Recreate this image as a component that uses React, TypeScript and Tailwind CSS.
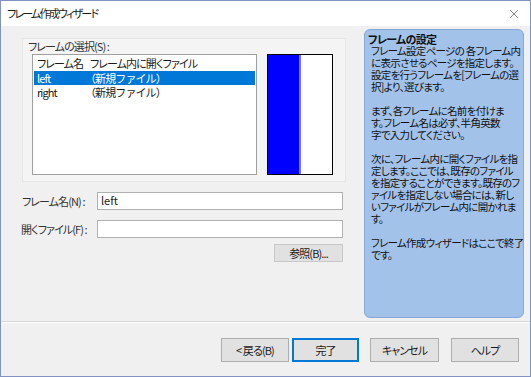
import React from 'react';
import { X } from 'lucide-react';

const font = "font-['Noto_Sans_CJK_JP','Noto_Sans',sans-serif] [font-feature-settings:'palt']";

const helpLines: string[][] = [
  ['フレーム設定ページの 各フレーム内', 'に表示させるページを指定します。', '設定を行うフレームを[フレームの選', '択]より、選びます。'],
  ['まず、各フレームに名前を付けま', 'す。フレーム名は必ず、半角英数', '字で入力してください。'],
  ['次に、フレーム内に開くファイルを指', '定します。ここでは、既存のファイル', 'を指定することができます。既存のフ', 'ァイルを指定しない場合には、新し', 'いファイルがフレーム内に開かれま', 'す。'],
  ['フレーム作成ウィザードはここで終了', 'です。'],
];

const Button: React.FC<{ label: string; width: string; primary?: boolean }> = ({ label, width, primary }) => (
  <div
    className={`${width} h-[24px] flex items-center justify-center text-[11px] text-[#1a1a1a] bg-[#e1e1e1] border ${
      primary ? 'border-[#0078d7] shadow-[inset_0_0_0_1px_#0078d7]' : 'border-[#adadad]'
    }`}
  >
    {label}
  </div>
);

const App: React.FC = () => {
  return (
    <div className={`w-[531px] h-[377px] flex flex-col bg-[#f0f0f0] border border-[#8390c2] overflow-hidden text-[#1a1a1a] tracking-[-0.9px] ${font}`}>
      {/* Title bar */}
      <div className="h-[25px] shrink-0 bg-white flex items-center justify-between pl-[6px] pr-[9px]">
        <span className="text-[11px] leading-none tracking-[-1.8px]">フレーム作成ウィザード</span>
        <X size={14} strokeWidth={1} className="text-[#333]" />
      </div>

      {/* Body */}
      <div className="flex-1 flex items-start pt-[3px]">
        {/* Left column */}
        <div className="ml-[19px] w-[325px] flex flex-col">
          <div className="mt-[9px] w-[324px] h-[144px] bg-[#f4f4f4] border border-[#e6e6e6] ml-[2px] flex flex-col">
            <div className="pl-[5px] h-[14px] text-[11px] leading-[14px] text-[#333]">フレームの選択(S) :</div>
            <div className="flex mt-[1px] ml-[9px]">
              <div className="w-[225px] h-[121px] bg-white border border-[#a0a0a0] flex flex-col pt-[2px] text-[11px]">
                <div className="flex h-[13px] leading-[13px] pl-[4px] whitespace-nowrap">
                  <span className="w-[53px]">フレーム名</span>
                  <span>フレーム内に開くファイル</span>
                </div>
                <div className="flex h-[14px] leading-[14px] pl-[3px] mt-[1px] mx-[1px] bg-[#0078d7] text-white whitespace-nowrap">
                  <span className="w-[48px]">left</span>
                  <span className="[font-feature-settings:normal]">（新規ファイル）</span>
                </div>
                <div className="flex h-[14px] leading-[14px] pl-[4px] whitespace-nowrap">
                  <span className="w-[48px]">right</span>
                  <span className="[font-feature-settings:normal]">（新規ファイル）</span>
                </div>
              </div>
              <div className="ml-[10px] w-[66px] h-[121px] border border-black flex bg-white">
                <div className="w-[31px] bg-[#0000ff]" />
                <div className="w-[2px] bg-[#7373e6]" />
                <div className="flex-1 bg-white" />
              </div>
            </div>
          </div>

          {/* Fields */}
          <div className="mt-[10px] flex items-center">
            <span className="w-[77px] pl-[2px] text-[11px] text-[#333] whitespace-nowrap">フレーム名(N) :</span>
            <div className="w-[246px] h-[18px] bg-white border border-[#b0b0b0] pl-[3px] text-[11px] leading-[15px] tracking-normal">left</div>
          </div>
          <div className="mt-[10px] flex items-center">
            <span className="w-[77px] pl-[1px] text-[11px] text-[#333] whitespace-nowrap">開くファイル(F) :</span>
            <div className="w-[246px] h-[18px] bg-white border border-[#b0b0b0]" />
          </div>
          <div className="mt-[6px] flex justify-end pr-[2px]">
            <div className="w-[69px] h-[18px] bg-[#e1e1e1] border border-[#c8c8c8] text-[11px] flex items-center justify-center">
              参照(B)...
            </div>
          </div>
        </div>

        {/* Help panel */}
        <div className="ml-[19px] w-[160px] h-[289px] rounded-[6px] bg-[#a3c2ea] border border-[#86a8d6] pl-[3px] pt-[2px] text-[10.5px] leading-[12px] tracking-[-0.7px] text-[#111]">
          <div className="font-bold text-[11px] leading-[14px] mb-[-1px]">フレームの設定</div>
          {helpLines.map((para, i) => (
            <div key={i} className={i > 0 ? 'mt-[12px] pl-[3px]' : 'pl-[3px]'}>
              {para.map((line, j) => (
                <div key={j} className="whitespace-nowrap">{line}</div>
              ))}
            </div>
          ))}
        </div>
      </div>

      {/* Separator */}
      <div className="h-[1px] bg-[#d5d5d5]" />
      <div className="h-[1px] bg-white" />

      {/* Buttons */}
      <div className="h-[53px] flex items-start justify-end pt-[15px] pr-[11px]">
        <Button label="< 戻る(B)" width="w-[68px]" />
        <div className="ml-[3px]">
          <Button label="完了" width="w-[67px]" primary />
        </div>
        <div className="ml-[11px]">
          <Button label="キャンセル" width="w-[69px]" />
        </div>
        <div className="ml-[12px]">
          <Button label="ヘルプ" width="w-[68px]" />
        </div>
      </div>
    </div>
  );
};

export default App;
